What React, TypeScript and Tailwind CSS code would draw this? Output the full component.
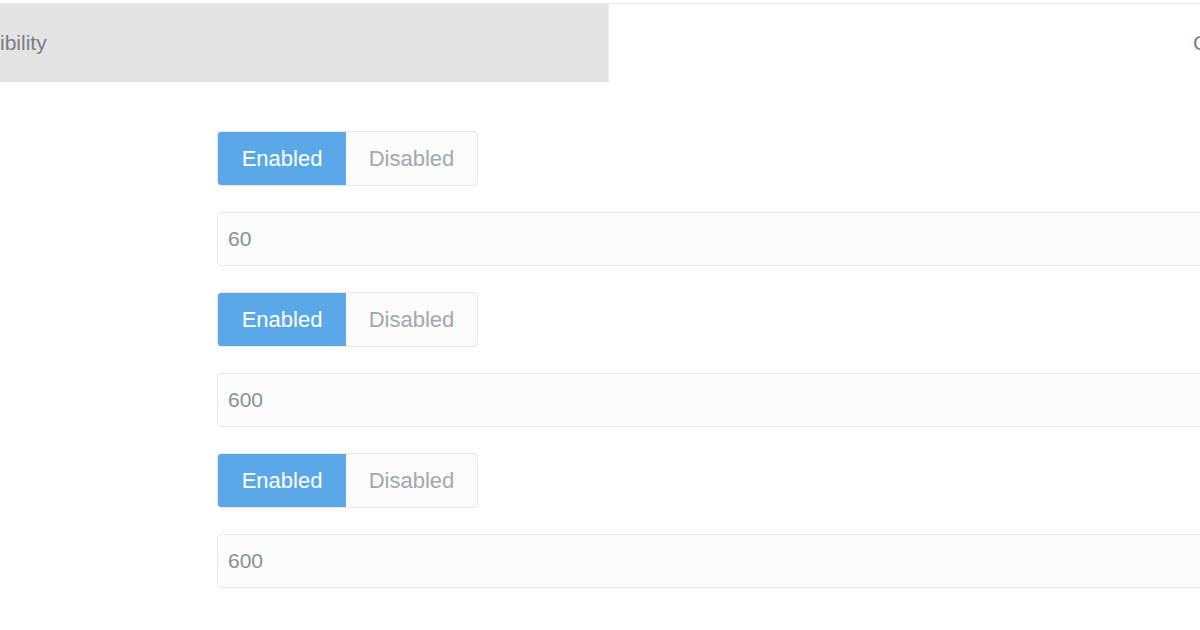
import React from "react";

function Toggle() {
  return (
    <div className="flex h-[55px] w-[261px] rounded-[4px] border border-[#e6e6e6] bg-[#fbfbfb] overflow-hidden">
      <div className="flex w-[128px] items-center justify-center bg-[#5aa8e7] text-[22px] text-white">
        Enabled
      </div>
      <div className="flex flex-1 items-center justify-center text-[22px] text-[#a3a8b0]">
        Disabled
      </div>
    </div>
  );
}

function Field({ value }: { value: string }) {
  return (
    <div className="flex h-[54px] w-[1000px] items-center rounded-[4px] border border-[#e8e8e8] bg-[#fcfcfc] pl-[10px] text-[21px] text-[#8a8f96]">
      {value}
    </div>
  );
}

export default function App() {
  return (
    <div
      className="h-[630px] w-[1200px] overflow-hidden bg-white pt-[3px]"
      style={{ fontFamily: '"Liberation Sans", Arial, sans-serif' }}
    >
      <div className="flex h-[79px] border-t border-[#e6e6e6]">
        <div className="flex h-full w-[609px] items-center whitespace-nowrap border-r border-[#ececec] bg-[#e4e4e4] text-[21px] text-[#7a7d82]">
          ibility
        </div>
        <div className="flex flex-1 items-center overflow-hidden whitespace-nowrap pl-[584px] text-[21px] text-[#7a7d82]">
          C
        </div>
      </div>
      <div className="mt-[49px] flex flex-col gap-[26px] pl-[217px]">
        <Toggle />
        <Field value="60" />
        <Toggle />
        <Field value="600" />
        <Toggle />
        <Field value="600" />
      </div>
    </div>
  );
}
